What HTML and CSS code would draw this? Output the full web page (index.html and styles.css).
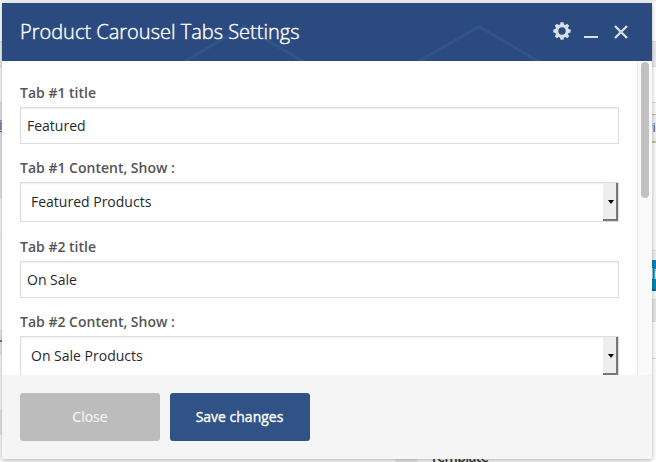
FILE: index.html
```html
<!DOCTYPE html>
<html lang="en">
<head>
<meta charset="utf-8">
<title>Product Carousel Tabs Settings</title>
<link rel="stylesheet" href="styles.css">
</head>
<body>
<div class="page">
  <div class="strip strip-left">
    <div class="row l1"></div><div class="row l2"></div><div class="row l3"></div>
    <div class="row l4"><a>i</a></div><div class="row l5"></div><div class="row l6"></div>
    <div class="row l7"></div><div class="row l8"></div><div class="row l9"></div>
    <div class="row l10"></div>
  </div>
  <div class="strip strip-right">
    <div class="row r1"></div><div class="row r2"></div><div class="row r3"></div>
    <div class="row r3b"></div>
    <div class="row r4">vi</div><div class="row r5"></div><div class="row r6"></div>
    <div class="row r7">di</div><div class="row r8"></div><div class="row r9"></div>
    <div class="row r10"></div><div class="row r11"></div>
  </div>
  <div class="behind"><span class="cell"></span><b>Template</b></div>
</div>
<section class="panel">
  <header class="header">
    <svg class="pattern" width="650" height="58" viewBox="0 0 650 58"><path d="M180 60 242 23.500 304 60M414 60 477 23.500 539 60"/></svg>
    <h1>Product Carousel Tabs Settings</h1>
    <div class="tools">
      <svg width="18" height="18" viewBox="0 0 18 18"><path fill-rule="evenodd" d="M7.500 .3h3l.5 2.200 1.300.5 1.900-1.200 2 2L15 5.700l.5 1.300 2.200.5v3l-2.200.5-.5 1.300 1.200 1.900-2 2-1.900-1.200-1.300.5-.5 2.200h-3L7 15.500 5.700 15l-1.900 1.200-2-2L3 12.300 2.500 11 .3 10.500v-3L2.500 7 3 5.700 1.800 3.800l2-2L5.700 3 7 2.500ZM9 5.300a3.700 3.700 0 1 0 0 7.400 3.700 3.700 0 0 0 0-7.400Z"/></svg>
      <span class="minimize"></span>
      <svg class="close" width="14" height="14" viewBox="0 0 14 14"><path d="m1 1 12 12M13 1 1 13"/></svg>
    </div>
  </header>
  <div class="body">
    <form class="form">
      <label>Tab #1 title</label>
      <div class="input">Featured</div>
      <label>Tab #1 Content, Show :</label>
      <div class="input select"><span>Featured Products</span><i class="drop"></i></div>
      <label>Tab #2 title</label>
      <div class="input">On Sale</div>
      <label>Tab #2 Content, Show :</label>
      <div class="input select"><span>On Sale Products</span><i class="drop"></i></div>
    </form>
    <div class="scrollbar"><div class="thumb"></div></div>
  </div>
  <footer class="footer">
    <div class="button muted">Close</div>
    <div class="button">Save changes</div>
  </footer>
</section>
</body>
</html>
```
FILE: styles.css
```css
* { box-sizing: border-box; }
body { margin: 0; width: 656px; height: 462px; overflow: hidden; background: #f9f9f9; font: 14px "Open Sans", sans-serif; }
.page { height: 462px; display: grid; grid-template-columns: 2px 1fr 4px; border-top: 2px solid #ececec; }
.strip { overflow: hidden; height: 460px; grid-row: 1; }
.strip-left { grid-column: 1; }
.strip-right { grid-column: 3; }
.row { overflow: hidden; border-bottom: 1px solid #ddd; background: #f7f7f7; }
.l1 { height: 40px; background: #fff; }
.l2 { height: 25px; background: #eee; }
.l3 { height: 36px; }
.l4 { height: 95px; background: #e5e5e5; padding-top: 12px; }
.l4 a { color: #0074a2; text-decoration: underline; margin-left: -1px; }
.l5 { height: 37px; border-color: #e8e8e8; }
.l6 { height: 95px; border: 0; }
.l7 { height: 12px; background: #e8e8e8; border-bottom: 2px solid #777; }
.l8 { height: 13px; background: #e8e8e8; border: 0; }
.l9 { height: 55px; border: 0; }
.l10 { height: 25px; background: #e8e8e8; border: 0; }
.r1 { height: 40px; background: #fff; }
.r2 { height: 25px; background: #e8e8e8; }
.r3 { height: 36px; background: #fff; }
.r3b { height: 12px; border-bottom-color: #bbb; }
.r4 { height: 28px; background: #f0f0f0; border-bottom: 2px solid #bbb; line-height: 24px; text-indent: -6px; white-space: nowrap; color: #444; font-size: 13px; }
.r5 { height: 108px; }
.r6 { height: 9px; background: #eee; border: 0; }
.r7 { height: 31px; background: #0085ba; border-bottom: 2px solid #006799; color: #fff; line-height: 27px; text-indent: -7px; white-space: nowrap; }
.r8 { height: 9px; }
.r9 { height: 22px; background: #e5e5e5; }
.r10 { height: 37px; background: #fcfcfc; }
.r11 { height: 110px; background: #fcfcfc; }
.behind { grid-column: 2; grid-row: 1; align-self: end; height: 20px; display: flex; gap: 13px; padding-left: 393px; overflow: hidden; color: #333; }
.cell { width: 22px; background: #e5e5e5; }
.behind b { font: 600 14px/22px "Open Sans", sans-serif; letter-spacing: -.7px; margin-top: 4px; }
.panel { position: absolute; left: 2px; top: 3px; width: 650px; height: 456px; display: flex; flex-direction: column; box-shadow: 0 1px 4px rgba(0,0,0,.3); border-radius: 0 0 2px 2px; overflow: hidden; }
.header { position: relative; height: 58px; flex: none; background: #2b4b80; display: flex; align-items: center; justify-content: space-between; padding: 0 24px 0 18px; }
.pattern { position: absolute; left: 0; top: 0; fill: none; stroke: #31548b; stroke-width: 3; }
h1 { position: relative; margin: 0; font-size: 20px; font-weight: 300; letter-spacing: 0; color: #fff; -webkit-text-stroke: .4px #fff; line-height: 58px; white-space: nowrap; }
.tools { position: relative; display: flex; align-items: center; fill: #d8dfea; }
.tools svg { margin-top: -2px; }
.minimize { width: 14px; height: 2px; margin: 10px 16px 0 13px; background: #d8dfea; }
.tools .close { margin-top: -1px; fill: none; stroke: #d8dfea; stroke-width: 2.200; }
.body { height: 314px; flex: none; display: flex; background: #fff; overflow: hidden; }
.form { flex: 1; margin: 0; padding: 20px 18px 0; }
label { display: block; height: 26px; line-height: 24px; font-size: 14px; font-weight: 600; color: #555; }
.input { height: 37px; margin-bottom: 12px; padding: 0 6px; border: 1px solid #ddd; box-shadow: inset 0 1px 2px rgba(0,0,0,.07); line-height: 35px; color: #26292c; background: #fff; }
.select { height: 40px; margin-bottom: 13px; padding: 0 0 0 10px; line-height: 38px; display: flex; justify-content: space-between; }
.drop { width: 15px; border-right: 2px solid #777; border-bottom: 2px solid #777; background: #eee; display: flex; align-items: center; justify-content: center; }
.drop::before { content: ""; border: 3px solid transparent; border-top: 4px solid #000; border-bottom: 0; margin: 2px 0 0 2px; }
.scrollbar { width: 15px; background: #fafafa; border-left: 1px solid #e8e8e8; padding: 1px 3px; }
.thumb { width: 8px; height: 136px; border-radius: 4px; background: #c1c1c1; }
.footer { flex: 1; background: #f5f5f5; padding: 18px; display: flex; gap: 10px; }
.button { width: 140px; height: 48px; border-radius: 3px; background: #305287; color: #fff; line-height: 48px; text-align: center; font-weight: 400; -webkit-text-stroke: .35px #fff; letter-spacing: 0; padding-right: 1px; }
.muted { background: #bcbcbc; color: #f4f4f4; -webkit-text-stroke: .2px #f4f4f4; padding-right: 0; }
```
